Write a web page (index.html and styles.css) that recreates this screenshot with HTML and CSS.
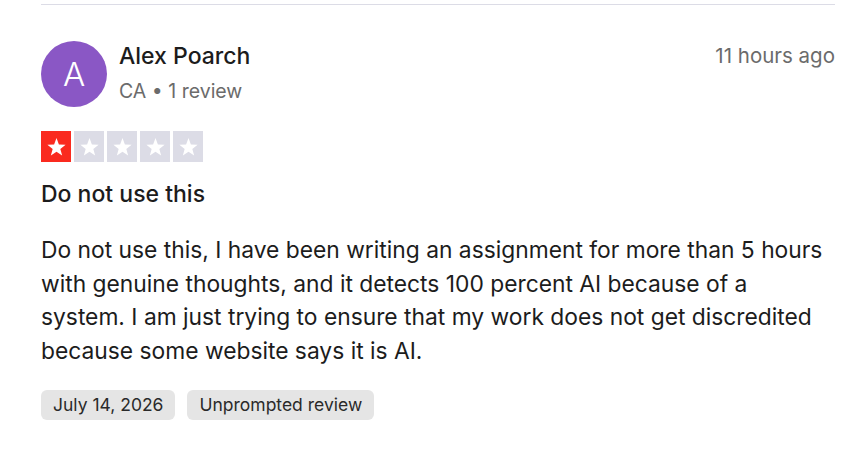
FILE: index.html
```html
<!DOCTYPE html>
<html lang="en">
<head>
    <meta charset="UTF-8">
    <meta name="viewport" content="width=device-width, initial-scale=1.0">
    <title>Review</title>
    <link rel="stylesheet" href="styles.css">
</head>
<body>
    <div class="review">
        <div class="review-head">
            <div class="avatar">A</div>
            <div class="who">
                <div class="name">Alex Poarch</div>
                <div class="meta">CA &bull; 1 review</div>
            </div>
            <div class="when">11 hours ago</div>
        </div>

        <!-- star rating, filled ones are red -->
        <div class="stars">
            <span class="star on"><svg viewBox="0 0 24 24"><path d="M12 3.2l2.5 6.6 7 .3-5.5 4.4 1.9 6.8L12 17.4l-5.9 3.9 1.9-6.8L2.5 10.1l7-.3z"/></svg></span>
            <span class="star"><svg viewBox="0 0 24 24"><path d="M12 3.2l2.5 6.6 7 .3-5.5 4.4 1.9 6.8L12 17.4l-5.9 3.9 1.9-6.8L2.5 10.1l7-.3z"/></svg></span>
            <span class="star"><svg viewBox="0 0 24 24"><path d="M12 3.2l2.5 6.6 7 .3-5.5 4.4 1.9 6.8L12 17.4l-5.9 3.9 1.9-6.8L2.5 10.1l7-.3z"/></svg></span>
            <span class="star"><svg viewBox="0 0 24 24"><path d="M12 3.2l2.5 6.6 7 .3-5.5 4.4 1.9 6.8L12 17.4l-5.9 3.9 1.9-6.8L2.5 10.1l7-.3z"/></svg></span>
            <span class="star"><svg viewBox="0 0 24 24"><path d="M12 3.2l2.5 6.6 7 .3-5.5 4.4 1.9 6.8L12 17.4l-5.9 3.9 1.9-6.8L2.5 10.1l7-.3z"/></svg></span>
        </div>

        <h3 class="title">Do not use this</h3>
        <p class="body">Do not use this, I have been writing an assignment for more than 5 hours with genuine thoughts, and it detects 100 percent AI because of a system. I am just trying to ensure that my work does not get discredited because some website says it is AI.</p>

        <div class="tags">
            <span class="tag">July 14, 2026</span>
            <span class="tag">Unprompted review</span>
        </div>
    </div>
</body>
</html>
```

FILE: styles.css
```css
* {
    margin: 0;
    padding: 0;
    box-sizing: border-box;
}

body {
    background: #fff;
    font-family: Inter, "Noto Sans", sans-serif;
    color: #1c1c1c;
}

.review {
    margin: 4px 29px 0 41px;
    padding-top: 36px;
    border-top: 1px solid #dcdce6;
}

.review-head {
    display: flex;
    align-items: flex-start;
}

.avatar {
    width: 66px;
    height: 66px;
    border-radius: 50%;
    background: #8a57c5;
    color: #fff;
    font-size: 33px;
    font-weight: 300;
    display: flex;
    align-items: center;
    justify-content: center;
    flex-shrink: 0;
}

.who {
    margin-left: 12px;
    flex: 1;
}

.name {
    font-size: 23px;
    font-weight: 500;
    line-height: 30px;
}

.meta {
    font-size: 19.5px;
    color: #6b6b6b;
    line-height: 26px;
    margin-top: 7px;
}

.when {
    font-size: 20.5px;
    color: #6b6b6b;
    line-height: 30px;
}

.stars {
    display: flex;
    gap: 3px;
    margin-top: 24px;
}

.star {
    width: 30px;
    height: 31px;
    background: #dcdce6;
    display: flex;
    align-items: center;
    justify-content: center;
}

.star.on {
    background: #fa2a1f;
}

.star svg {
    width: 23px;
    height: 23px;
    fill: #fff;
}

.title {
    font-size: 23px;
    font-weight: 500;
    line-height: 28px;
    margin-top: 18px;
}

.body {
    font-size: 22.8px;
    line-height: 33.5px;
    margin-top: 25px;
}

.tags {
    display: flex;
    gap: 12px;
    margin-top: 23px;
}

.tag {
    background: #e5e5e5;
    border-radius: 6px;
    font-size: 17.5px;
    line-height: 30px;
    padding: 0 12px;
    color: #2a2a2a;
}
```
